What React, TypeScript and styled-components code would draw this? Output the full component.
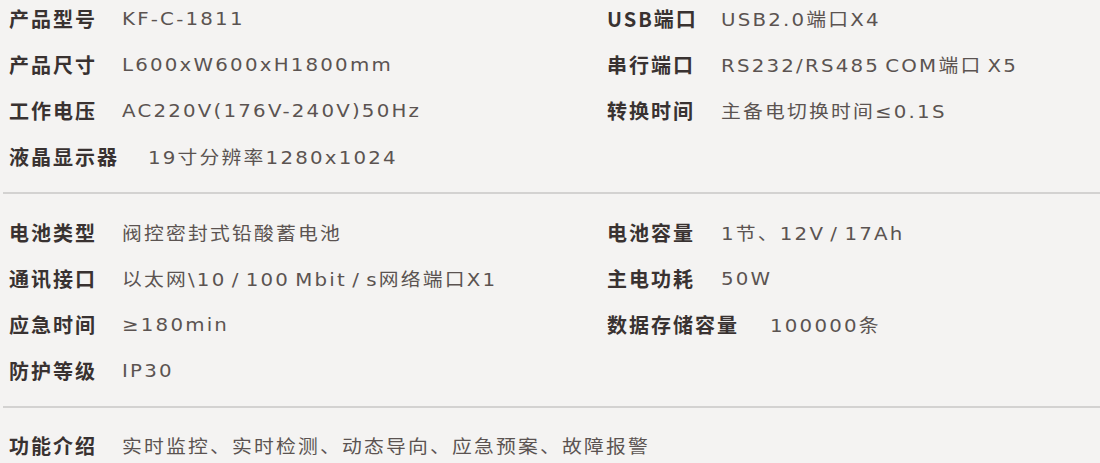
import React from 'react';
import styled, { createGlobalStyle } from 'styled-components';

interface ISpec {
    label: string;
    value: string;
    w?: number;
};

const GlobalStyle = createGlobalStyle`
    html, body {
        margin: 0;
        padding: 0;
        background: #f4f3f2;
    }
`;

const sections: { left: ISpec[]; right: ISpec[] }[] = [
    {
        left: [
            { label: '产品型号', value: 'KF-C-1811' },
            { label: '产品尺寸', value: 'L600xW600xH1800mm' },
            { label: '工作电压', value: 'AC220V(176V-240V)50Hz' },
            { label: '液晶显示器', value: '19寸分辨率1280x1024', w: 139 },
        ],
        right: [
            { label: 'USB端口', value: 'USB2.0端口X4' },
            { label: '串行端口', value: 'RS232/RS485 COM端口 X5' },
            { label: '转换时间', value: '主备电切换时间≤0.1S' },
        ],
    },
    {
        left: [
            { label: '电池类型', value: '阀控密封式铅酸蓄电池' },
            { label: '通讯接口', value: '以太网\\10 / 100 Mbit / s网络端口X1' },
            { label: '应急时间', value: '≥180min' },
            { label: '防护等级', value: 'IP30' },
        ],
        right: [
            { label: '电池容量', value: '1节、12V / 17Ah' },
            { label: '主电功耗', value: '50W' },
            { label: '数据存储容量', value: '100000条', w: 163 },
        ],
    },
];

const SpecRow = ({ spec, defaultW }: { spec: ISpec; defaultW: number }) => (
    <StyledRow>
        <StyledLabel $w={spec.w ?? defaultW}>{spec.label}</StyledLabel>
        <StyledValue>{spec.value}</StyledValue>
    </StyledRow>
);

const App = () => {
  return (
    <StyledPage>
        <GlobalStyle />
        {sections.map((section, i) => (
            <React.Fragment key={i}>
                <StyledSection $top={i === 0 ? 4 : 24}>
                    <StyledColumn>
                        {section.left.map(spec => <SpecRow key={spec.label} spec={spec} defaultW={113} />)}
                    </StyledColumn>
                    <StyledColumn>
                        {section.right.map(spec => <SpecRow key={spec.label} spec={spec} defaultW={114} />)}
                    </StyledColumn>
                </StyledSection>
                <StyledDivider />
            </React.Fragment>
        ))}
        <StyledSection $top={23}>
            <StyledColumn>
                <SpecRow spec={{ label: '功能介绍', value: '实时监控、实时检测、动态导向、应急预案、故障报警' }} defaultW={113} />
            </StyledColumn>
        </StyledSection>
    </StyledPage>
  )
}

export default App;

const StyledPage = styled.div`
    width: 1100px;
    height: 463px;
    overflow: hidden;
    background: #f4f3f2;
`;

const StyledSection = styled.section<{ $top: number }>`
    display: grid;
    grid-template-columns: 598px 1fr;
    padding: ${props => props.$top}px 0 22px 9px;
`;

const StyledColumn = styled.div`
    display: flex;
    flex-direction: column;
    gap: 18px;
`;

const StyledRow = styled.div`
    display: flex;
    align-items: center;
    height: 28px;
    white-space: nowrap;
`;

const StyledLabel = styled.span<{ $w: number }>`
    flex: 0 0 auto;
    min-width: ${props => props.$w}px;
    font-family: 'Noto Sans CJK SC', 'Noto Sans', sans-serif;
    font-weight: 700;
    font-size: 20px;
    letter-spacing: 2px;
    color: #393231;
`;

/* the source text is set wide, so stretch it a little */
const StyledValue = styled.span`
    display: inline-block;
    font-family: 'DejaVu Sans', 'Noto Sans CJK SC', sans-serif;
    font-size: 18px;
    letter-spacing: 2px;
    word-spacing: -3px;
    color: #5b5351;
    transform: scaleX(1.1);
    transform-origin: left center;
`;

const StyledDivider = styled.hr`
    margin: 0 0 0 3px;
    border: none;
    height: 2px;
    background: #d3d2d1;
`;
